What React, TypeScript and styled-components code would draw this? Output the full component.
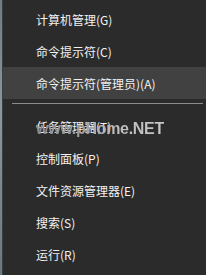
import React from 'react';
import styled, {createGlobalStyle} from 'styled-components';

const GlobalStyle = createGlobalStyle`
  html, body {
    margin: 0;
    padding: 0;
    background: #2b2b2b;
    overflow: hidden;
  }
`;

const Screen = styled.div`
  position: relative;
  display: flex;
  width: 206px;
  height: 275px;
  background: #2b2b2b;
  font-family: "Noto Sans CJK SC", "Noto Sans", sans-serif;
`;

const DesktopEdge = styled.div`
  width: 3px;
  flex: none;
  background: linear-gradient(180deg, #6f7c84 0%, #8a98a0 40%, #7a8890 70%, #6a7880 100%);
  box-shadow: inset -1px 0 0 #3a3e40;
`;

const Menu = styled.ul`
  flex: 1;
  margin: 0;
  padding: 3px 0 0;
  list-style: none;
`;

const Item = styled.li<{ $active?: boolean }>`
  display: flex;
  align-items: center;
  height: 32px;
  padding: 2px 0 0 33px;
  box-sizing: border-box;
  background: ${p => (p.$active ? '#414141' : 'transparent')};
  color: #f2f2f2;
  font-size: 12px;
  line-height: 1;
  white-space: nowrap;
`;

const Separator = styled.li`
  height: 1px;
  margin: 4px 3px 6px 9px;
  background: #8c8c8c;
`;

// watermark of the source picture, lying over the menu
const Watermark = styled.div`
  position: absolute;
  left: 36px;
  top: 121px;
  font-family: "Liberation Sans", Arial, sans-serif;
  font-weight: bold;
  font-size: 16px;
  line-height: 1;
  letter-spacing: -0.3px;
  background: linear-gradient(90deg, #8a8a8a 0%, #9c9c9c 35%, #bdbdbd 60%, #c8c8c8 100%);
  -webkit-background-clip: text;
  background-clip: text;
  color: transparent;
  pointer-events: none;
`;

const upper = [
    {label: '计算机管理(G)'},
    {label: '命令提示符(C)'},
    {label: '命令提示符(管理员)(A)', active: true},
];

const lower = [
    '任务管理器(T)',
    '控制面板(P)',
    '文件资源管理器(E)',
    '搜索(S)',
    '运行(R)',
];

export default function App() {
    return (
        <>
            <GlobalStyle/>
            <Screen>
                <DesktopEdge/>
                <Menu>
                    {upper.map(i => <Item key={i.label} $active={i.active}>{i.label}</Item>)}
                    <Separator/>
                    {lower.map(l => <Item key={l}>{l}</Item>)}
                </Menu>
                <Watermark>www.pHome.NET</Watermark>
            </Screen>
        </>
    );
}
